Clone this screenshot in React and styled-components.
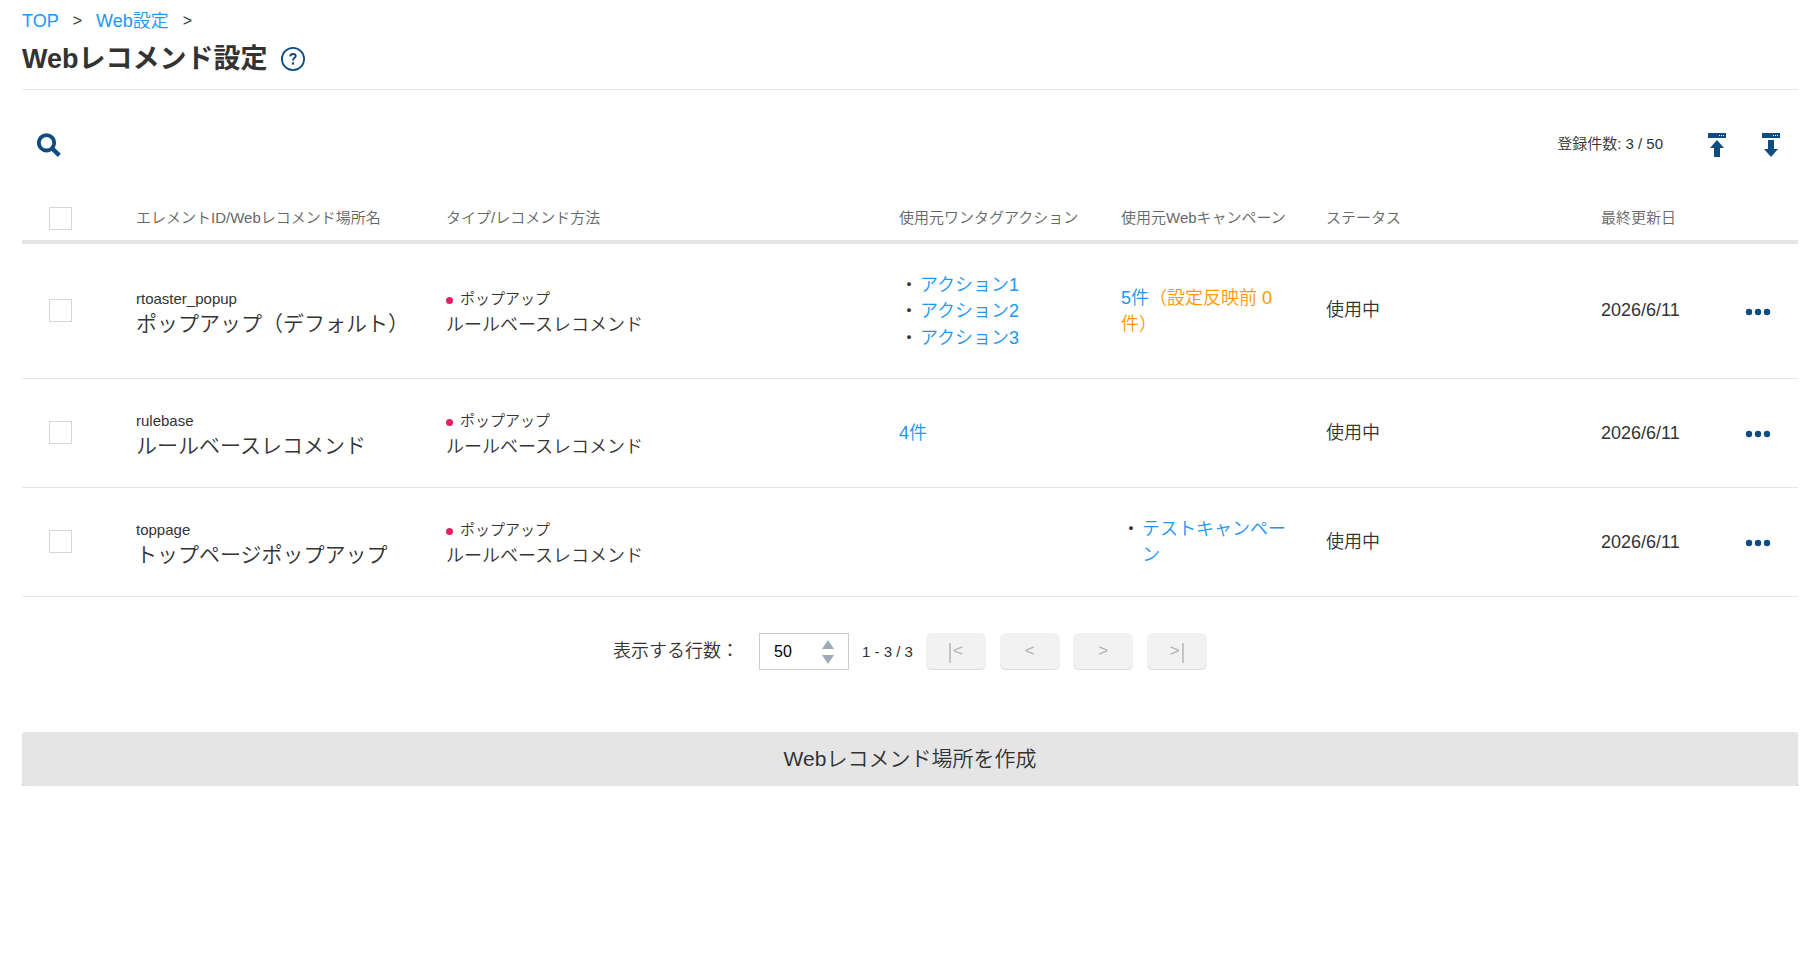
import styled, { createGlobalStyle } from 'styled-components'

const Colors = {
  text: '#333333',
  muted: '#666666',
  navy: '#0f4c81',
  link: '#2196f3',
  orange: '#ff9800',
  line: '#e5e5e5',
}

const rows = [
  {
    id: 'rtoaster_popup',
    name: 'ポップアップ（デフォルト）',
    height: 135,
    actions: ['アクション1', 'アクション2', 'アクション3'],
    campaignCount: '5件',
    pending: '（設定反映前 0件）',
  },
  {
    id: 'rulebase',
    name: 'ルールベースレコメンド',
    height: 109,
    actionCount: '4件',
  },
  {
    id: 'toppage',
    name: 'トップページポップアップ',
    height: 109,
    campaigns: ['テストキャンペーン'],
  },
]

const HelpIcon = () => (
  <svg width="24" height="24" viewBox="0 0 24 24">
    <circle cx="12" cy="12" r="11.1" fill="none" stroke={Colors.navy} strokeWidth="1.8" />
    <path
      d="M9.2 9.4c.1-1.6 1.1-2.5 2.8-2.5 1.6 0 2.7.9 2.7 2.2 0 1.9-2.7 2-2.7 4.3"
      fill="none"
      stroke={Colors.navy}
      strokeWidth="2"
    />
    <rect x="10.9" y="15.3" width="2.2" height="2.3" fill={Colors.navy} />
  </svg>
)

const SearchIcon = () => (
  <svg width="24" height="24" viewBox="0 0 24 24">
    <circle cx="9.5" cy="9.8" r="7.7" fill="none" stroke={Colors.navy} strokeWidth="3.8" />
    <path d="M15 15.2l7.3 7.2" stroke={Colors.navy} strokeWidth="4.4" />
  </svg>
)

const TransferIcon = ({ up }) => (
  <svg width="18" height="24" viewBox="0 0 18 24">
    <path
      d="M0 0H18V5H0ZM11 2V3H12V2ZM13 2V3H14V2ZM15 2V3H16V2Z"
      fill={Colors.navy}
      fillRule="evenodd"
    />
    <path
      d={up ? 'M9 7L16 15H12V24H6V15H2Z' : 'M6 7H12V16H16L9 24L2 16H6Z'}
      fill={Colors.navy}
    />
  </svg>
)

const DotsIcon = () => (
  <svg width="26" height="8" viewBox="0 0 26 8">
    <circle cx="4" cy="4" r="3.2" fill={Colors.navy} />
    <circle cx="13" cy="4" r="3.2" fill={Colors.navy} />
    <circle cx="22" cy="4" r="3.2" fill={Colors.navy} />
  </svg>
)

const LinkList = ({ items }) => (
  <List>
    {items.map((item) => (
      <ListItem key={item}>
        <Bullet>・</Bullet>
        <Link href="#">{item}</Link>
      </ListItem>
    ))}
  </List>
)

const App = () => {
  return (
    <Page>
      <GlobalStyle />
      <Breadcrumb>
        <Link href="#">TOP</Link>
        <Separator>&gt;</Separator>
        <Link href="#">Web設定</Link>
        <Separator>&gt;</Separator>
      </Breadcrumb>
      <TitleBar>
        <Title>Webレコメンド設定</Title>
        <HelpIcon />
      </TitleBar>

      <Toolbar>
        <IconButton aria-label="検索">
          <SearchIcon />
        </IconButton>
        <ToolbarRight>
          <Count>登録件数: 3 / 50</Count>
          <IconButton aria-label="アップロード">
            <TransferIcon up />
          </IconButton>
          <IconButton aria-label="ダウンロード">
            <TransferIcon />
          </IconButton>
        </ToolbarRight>
      </Toolbar>

      <TableHead>
        <CheckCell>
          <Checkbox type="checkbox" />
        </CheckCell>
        <div>エレメントID/Webレコメンド場所名</div>
        <div>タイプ/レコメンド方法</div>
        <div>使用元ワンタグアクション</div>
        <div>使用元Webキャンペーン</div>
        <div>ステータス</div>
        <div>最終更新日</div>
      </TableHead>
      {rows.map((row) => (
        <TableRow key={row.id} $height={row.height}>
          <CheckCell $raised>
            <Checkbox type="checkbox" />
          </CheckCell>
          <NameCell>
            <ElementId>{row.id}</ElementId>
            <ElementName>{row.name}</ElementName>
          </NameCell>
          <NameCell>
            <TypeName>
              <TypeDot />
              ポップアップ
            </TypeName>
            <Method>ルールベースレコメンド</Method>
          </NameCell>
          <ActionCell>
            {row.actions && <LinkList items={row.actions} />}
            {row.actionCount && <Link href="#">{row.actionCount}</Link>}
          </ActionCell>
          <CampaignCell>
            {row.campaigns && <LinkList items={row.campaigns} />}
            {row.campaignCount && <Link href="#">{row.campaignCount}</Link>}
            {row.pending && <Pending>{row.pending}</Pending>}
          </CampaignCell>
          <StatusCell $raised={Boolean(row.actions)}>使用中</StatusCell>
          <StatusCell $raised={Boolean(row.actions)}>2026/6/11</StatusCell>
          <MenuButton aria-label="メニュー">
            <DotsIcon />
          </MenuButton>
        </TableRow>
      ))}

      <Pagination>
        <PageLabel>表示する行数：</PageLabel>
        <PageSize>
          50
          <Arrows viewBox="0 0 12 24">
            <path d="M0 9L6 0L12 9ZM0 15H12L6 24Z" fill="#9daab8" />
          </Arrows>
        </PageSize>
        <Range>1 - 3 / 3</Range>
        <PageButtons>
          <PageButton disabled>
            <Bar />
            &lt;
          </PageButton>
          <PageButton disabled>&lt;</PageButton>
          <PageButton disabled>&gt;</PageButton>
          <PageButton disabled>
            &gt;
            <Bar />
          </PageButton>
        </PageButtons>
      </Pagination>

      <CreateButton>Webレコメンド場所を作成</CreateButton>
    </Page>
  )
}

export default App

const GlobalStyle = createGlobalStyle`
  * {
    box-sizing: border-box;
  }

  body {
    margin: 0;
    background: #ffffff;
    color: ${Colors.text};
    font-family: 'Liberation Sans', 'Noto Sans CJK JP', sans-serif;
    font-size: 18px;
    font-weight: 350;
    line-height: 26.5px;
  }
`

const ActionCell = styled.div`
  padding-top: 1px;
`

const Arrows = styled.svg`
  width: 12px;
  height: 24px;
  margin-bottom: 2px;
`

const Bar = styled.span`
  width: 2px;
  height: 20px;
  margin-top: 3px;
  background: #c4c4c4;
`

const Breadcrumb = styled.nav`
  display: flex;
  align-items: center;
  height: 40px;
  padding-top: 2px;
`

const Bullet = styled.span`
  flex: none;
  width: 21px;
  padding-left: 1px;
`

const CampaignCell = styled.div`
  padding-right: 36px;
`

const CheckCell = styled.div`
  display: flex;
  padding: 0 0 ${({ $raised }) => ($raised ? '2px' : '1px')} 27px;
`

const Checkbox = styled.input`
  appearance: none;
  width: 23px;
  height: 23px;
  margin: 0;
  border: 1px solid #d5d5d5;
  background: #ffffff;
`

const Count = styled.span`
  margin: -2px 45px 0 0;
  font-size: 15px;
`

const CreateButton = styled.button`
  width: 100%;
  height: 54px;
  margin-top: 62px;
  padding: 0 0 5px;
  border: none;
  border-radius: 3px;
  background: #e5e5e5;
  box-shadow: 0 1px 1px rgba(0, 0, 0, 0.3);
  color: ${Colors.text};
  font-family: inherit;
  font-size: 21px;
  font-weight: inherit;
`

const ElementId = styled.div`
  font-size: 15px;
  line-height: 22px;
`

const ElementName = styled.div`
  font-size: 21px;
  line-height: 27px;
`

const IconButton = styled.button`
  display: flex;
  padding: 0;
  border: none;
  background: none;
`

const Link = styled.a`
  color: ${Colors.link};
  text-decoration: none;
`

const List = styled.ul`
  margin: 0;
  padding: 0;
  list-style: none;
`

const ListItem = styled.li`
  display: flex;
`

const MenuButton = styled(IconButton)`
  padding: 2px 0 0 1px;
`

const Method = styled.div`
  line-height: 26px;
`

const NameCell = styled.div`
  padding-top: 2px;
`

const Page = styled.main`
  padding: 0 20px 0 22px;
`

const PageButton = styled.button`
  display: flex;
  align-items: center;
  justify-content: center;
  gap: 2px;
  width: 60px;
  height: 37px;
  padding: 0 0 1px;
  border: none;
  border-radius: 6px;
  background: #f2f2f2;
  box-shadow: inset 0 -1px 0 #dddddd;
  color: #b0b0b0;
  font-family: inherit;
  font-size: 17px;
`

const PageButtons = styled.div`
  display: flex;
  gap: 13.6px;
`

const PageLabel = styled.span`
  width: 146px;
`

const PageSize = styled.div`
  display: flex;
  align-items: center;
  justify-content: space-between;
  width: 90px;
  height: 37px;
  padding: 2px 14px 0;
  border: 1px solid #cccccc;
  color: #000000;
  font-size: 16px;
`

const Pagination = styled.div`
  display: flex;
  align-items: center;
  height: 37px;
  margin-top: 36px;
  padding-left: 591px;
`

const Pending = styled.span`
  color: ${Colors.orange};
`

const Range = styled.span`
  width: 77px;
  padding: 2px 0 0 13px;
  font-size: 15px;
  white-space: nowrap;
`

const Separator = styled.span`
  margin: 0 14px;
  font-size: 16px;
`

const StatusCell = styled.div`
  padding-bottom: ${({ $raised }) => ($raised ? '1px' : '0')};
`

const TableHead = styled.div`
  display: grid;
  grid-template-columns: 114px 310px 453px 222px 205px 275px 197px;
  align-items: center;
  height: 50px;
  padding-top: 3px;
  border-bottom: 4px solid ${Colors.line};
  color: ${Colors.muted};
  font-size: 15px;
`

const TableRow = styled.div`
  display: grid;
  grid-template-columns: 114px 310px 453px 222px 205px 275px 143px 1fr;
  align-items: center;
  height: ${({ $height }) => $height}px;
  border-bottom: 1px solid ${Colors.line};
`

const Title = styled.h1`
  margin: 0;
  padding-top: 2px;
  font-size: 27px;
  font-weight: bold;
`

const TitleBar = styled.header`
  display: flex;
  align-items: center;
  gap: 13px;
  height: 50px;
  padding-bottom: 12px;
  border-bottom: 1px solid ${Colors.line};
`

const Toolbar = styled.div`
  display: flex;
  align-items: center;
  justify-content: space-between;
  height: 104px;
  padding: 6px 18px 0 15px;
`

const ToolbarRight = styled.div`
  display: flex;
  align-items: center;

  button + button {
    margin-left: 36px;
  }
`

const TypeDot = styled.span`
  width: 7px;
  height: 7px;
  margin: 2px 7px 0 0;
  border-radius: 50%;
  background: #e91e63;
`

const TypeName = styled.div`
  display: flex;
  align-items: center;
  font-size: 15px;
  line-height: 26px;
`
